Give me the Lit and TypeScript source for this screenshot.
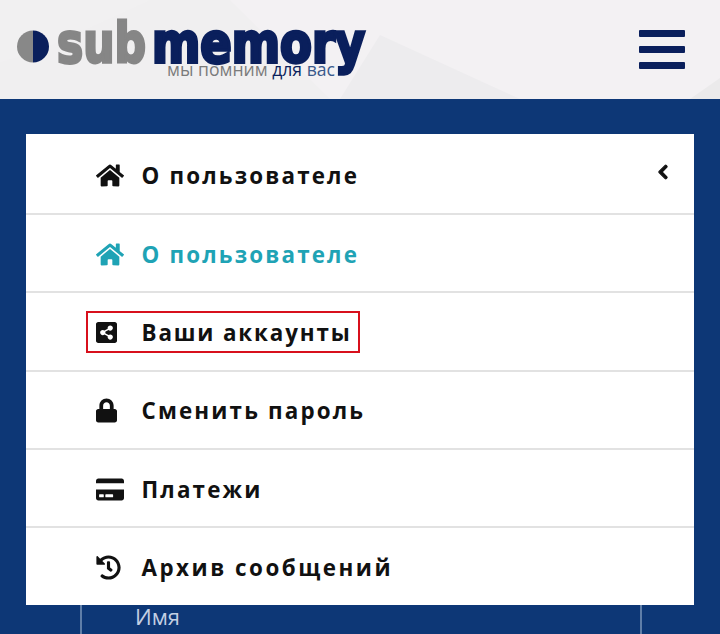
import { LitElement, html, css, svg } from "lit";
import { customElement } from "lit/decorators.js";

const HOME = "M280.37 148.26L96 300.11V464a16 16 0 0 0 16 16l112.06-.29a16 16 0 0 0 15.92-16V368a16 16 0 0 1 16-16h64a16 16 0 0 1 16 16v95.64a16 16 0 0 0 16 16.05L464 480a16 16 0 0 0 16-16V300L295.67 148.26a12.19 12.19 0 0 0-15.3 0zM571.6 251.47L488 182.56V44.05a12 12 0 0 0-12-12h-56a12 12 0 0 0-12 12v72.61L318.47 43a48 48 0 0 0-61 0L4.34 251.47a12 12 0 0 0-1.6 16.9l25.5 31A12 12 0 0 0 45.15 301l235.22-193.74a12.19 12.19 0 0 1 15.3 0L530.9 301a12 12 0 0 0 16.9-1.6l25.5-31a12 12 0 0 0-1.7-16.93z";
const SHARE = "M448 80v352c0 26.51-21.49 48-48 48H48c-26.51 0-48-21.49-48-48V80c0-26.51 21.49-48 48-48h352c26.51 0 48 21.49 48 48zM304 296c-14.562 0-27.823 5.561-37.783 14.671l-67.958-40.775a56.339 56.339 0 0 0 0-27.793l67.958-40.775C276.177 210.439 289.438 216 304 216c30.928 0 56-25.072 56-56s-25.072-56-56-56-56 25.072-56 56c0 4.797.605 9.453 1.74 13.897l-67.958 40.775C171.823 205.561 158.562 200 144 200c-30.928 0-56 25.072-56 56s25.072 56 56 56c14.562 0 27.823-5.561 37.783-14.671l67.958 40.775a56.088 56.088 0 0 0-1.74 13.897c0 30.928 25.072 56 56 56s56-25.072 56-56C360 321.072 334.928 296 304 296z";
const LOCK = "M400 224h-24v-72C376 68.2 307.8 0 224 0S72 68.2 72 152v72H48c-26.5 0-48 21.5-48 48v192c0 26.5 21.5 48 48 48h352c26.5 0 48-21.5 48-48V272c0-26.5-21.5-48-48-48zm-104 0H152v-72c0-39.7 32.3-72 72-72s72 32.3 72 72v72z";
const CARD = "M0 432c0 26.5 21.5 48 48 48h480c26.5 0 48-21.5 48-48V256H0v176zm192-68c0-6.6 5.4-12 12-12h136c6.6 0 12 5.4 12 12v40c0 6.6-5.4 12-12 12H204c-6.6 0-12-5.4-12-12v-40zm-128 0c0-6.6 5.4-12 12-12h72c6.6 0 12 5.4 12 12v40c0 6.6-5.4 12-12 12H76c-6.6 0-12-5.4-12-12v-40zM576 80v48H0V80c0-26.5 21.5-48 48-48h480c26.5 0 48 21.5 48 48z";
const HISTORY = "M504 255.531c.253 136.64-111.18 248.372-247.82 248.468-59.015.042-113.223-20.53-155.822-54.911-11.077-8.94-11.905-25.541-1.839-35.607l11.267-11.267c8.609-8.609 22.353-9.551 31.891-1.984C173.062 425.135 212.781 440 256 440c101.705 0 184-82.311 184-184 0-101.705-82.311-184-184-184-48.814 0-93.149 18.969-126.068 49.932l50.754 50.754c10.08 10.08 2.941 27.314-11.313 27.314H24c-8.837 0-16-7.163-16-16V38.627c0-14.254 17.234-21.393 27.314-11.314l49.372 49.372C129.209 34.136 189.552 8 256 8c136.81 0 247.747 110.78 248 247.531zm-180.912 78.784l9.823-12.63c8.138-10.463 6.253-25.542-4.21-33.679L288 256.349V152c0-13.255-10.745-24-24-24h-16c-13.255 0-24 10.745-24 24v135.651l65.409 50.874c10.463 8.137 25.541 6.253 33.679-4.21z";
const CHEV = "M34.52 239.03L228.87 44.69c9.37-9.37 24.57-9.37 33.94 0l22.67 22.67c9.36 9.36 9.37 24.52.04 33.9L131.49 256l154.02 154.75c9.34 9.38 9.32 24.54-.04 33.9l-22.67 22.67c-9.37 9.37-24.57 9.37-33.94 0L34.52 272.97c-9.37-9.37-9.37-24.57 0-33.94z";

interface Item { label: string; path: string; vb: string; w: number; active?: boolean; marked?: boolean; chevron?: boolean; wide?: boolean; }

const ITEMS: Item[] = [
  { label: "О пользователе", path: HOME, vb: "0 0 576 512", w: 28, chevron: true },
  { label: "О пользователе", path: HOME, vb: "0 0 576 512", w: 28, active: true },
  { label: "Ваши аккаунты", path: SHARE, vb: "0 0 448 512", w: 21, marked: true },
  { label: "Сменить пароль", path: LOCK, vb: "0 0 448 512", w: 21 },
  { label: "Платежи", path: CARD, vb: "0 0 576 512", w: 28 },
  { label: "Архив сообщений", path: HISTORY, vb: "0 0 512 512", w: 25, wide: true },
];

@customElement("app-root")
export class AppRoot extends LitElement {
  static styles = css`
    :host { display: block; height: 634px; overflow: hidden; background: #0d3776; font-family: "Open Sans", sans-serif; }
    .header { height: 99px; background: #f3f1f3; position: relative; display: flex; align-items: flex-start; justify-content: space-between; overflow: hidden; }
    .bg { position: absolute; inset: 0; width: 100%; height: 100%; }
    .logo { position: relative; display: block; margin: 20px 0 0 16px; width: 356px; height: 60px; overflow: visible; }
    .burger { position: relative; margin: 30px 35px 0 0; display: flex; flex-direction: column; gap: 9px; }
    .burger i { display: block; width: 46px; height: 7px; border-radius: 1px; background: #0a1f5c; }
    .main { padding: 35px 26px 0; }
    .card { background: #fff; display: flex; flex-direction: column; }
    .row { height: 76.3px; display: flex; align-items: center; justify-content: space-between; padding: 0 26px 0 60px; border-bottom: 2px solid #e2e2e2; }
    .row:first-child { height: 77px; padding-top: 2px; }
    .row:last-child { border-bottom: 0; height: 77px; }
    .content { display: inline-flex; align-items: center; margin-top: 2px; padding: 0 6px 0 8px; height: 38px; border: 2px solid transparent; color: #111; font-size: 22.4px; font-weight: 700; letter-spacing: 2.15px; white-space: nowrap; }
    .content.active { color: #1fa3b5; }
    .content.marked { border-color: #d8101c; letter-spacing: 1.85px; }
    .content.wide { letter-spacing: 2.5px; }
    .slot { width: 45.5px; flex: none; display: flex; }
    .slot svg { display: block; height: 25px; fill: currentColor; }
    .chev { width: 10px; height: 16px; fill: #111; stroke: #111; stroke-width: 36; margin-top: -5px; overflow: visible; }
    .under { margin: 0 52px 0 54px; height: 29px; border-left: 2px solid #5f7ea8; border-right: 2px solid #5f7ea8; padding-left: 53px; color: #c3cfe3; font-size: 22px; line-height: 22px; }
  `;

  private logo() {
    return html`<svg class="logo" viewBox="0 0 356 60" aria-label="submemory">
      <path d="M17 10.5a16 16 0 0 0 0 32z" fill="#888"/>
      <path d="M17 10.5a16 16 0 0 1 0 32z" fill="#0a1f5c"/>
      <text x="41" y="42" textLength="89" lengthAdjust="spacingAndGlyphs" font-family="DejaVu Sans" font-weight="700" font-size="55" fill="#868686" stroke="#868686" stroke-width="3">sub</text>
      <text x="136" y="42" textLength="213" lengthAdjust="spacingAndGlyphs" font-family="DejaVu Sans" font-weight="700" font-size="55" fill="#0a1f5c" stroke="#0a1f5c" stroke-width="3.5">memory</text>
      <text x="151" y="56" textLength="168" lengthAdjust="spacingAndGlyphs" font-family="Open Sans" font-size="19"><tspan fill="#7b7b7b">мы помним </tspan><tspan fill="#0a1f5c">для</tspan><tspan fill="#3a5a8c"> вас</tspan></text>
    </svg>`;
  }

  render() {
    return html`
      <div class="header">
        <svg class="bg" viewBox="0 0 720 99" preserveAspectRatio="none">
          ${svg`<polygon points="0,0 150,0 40,50 0,62" fill="#f1f0f1"/>
            <polygon points="0,62 40,50 150,0 230,0 330,99 0,99" fill="#f0eff0"/>
            <polygon points="340,99 380,35 520,99" fill="#edecee"/>
            <polygon points="690,99 720,78 720,99" fill="#ebeaeb"/>`}
        </svg>
        ${this.logo()}
        <div class="burger"><i></i><i></i><i></i></div>
      </div>
      <div class="main">
        <div class="card">
          ${ITEMS.map((it) => html`
            <div class="row">
              <span class="content ${it.active ? "active" : ""} ${it.marked ? "marked" : ""} ${it.wide ? "wide" : ""}">
                <span class="slot"><svg viewBox=${it.vb} style="width:${it.w}px"><path d=${it.path}></path></svg></span>
                <span>${it.label}</span>
              </span>
              ${it.chevron ? html`<svg class="chev" viewBox="0 0 320 512"><path d=${CHEV}></path></svg>` : ""}
            </div>`)}
        </div>
        <div class="under">Имя</div>
      </div>
    `;
  }
}
